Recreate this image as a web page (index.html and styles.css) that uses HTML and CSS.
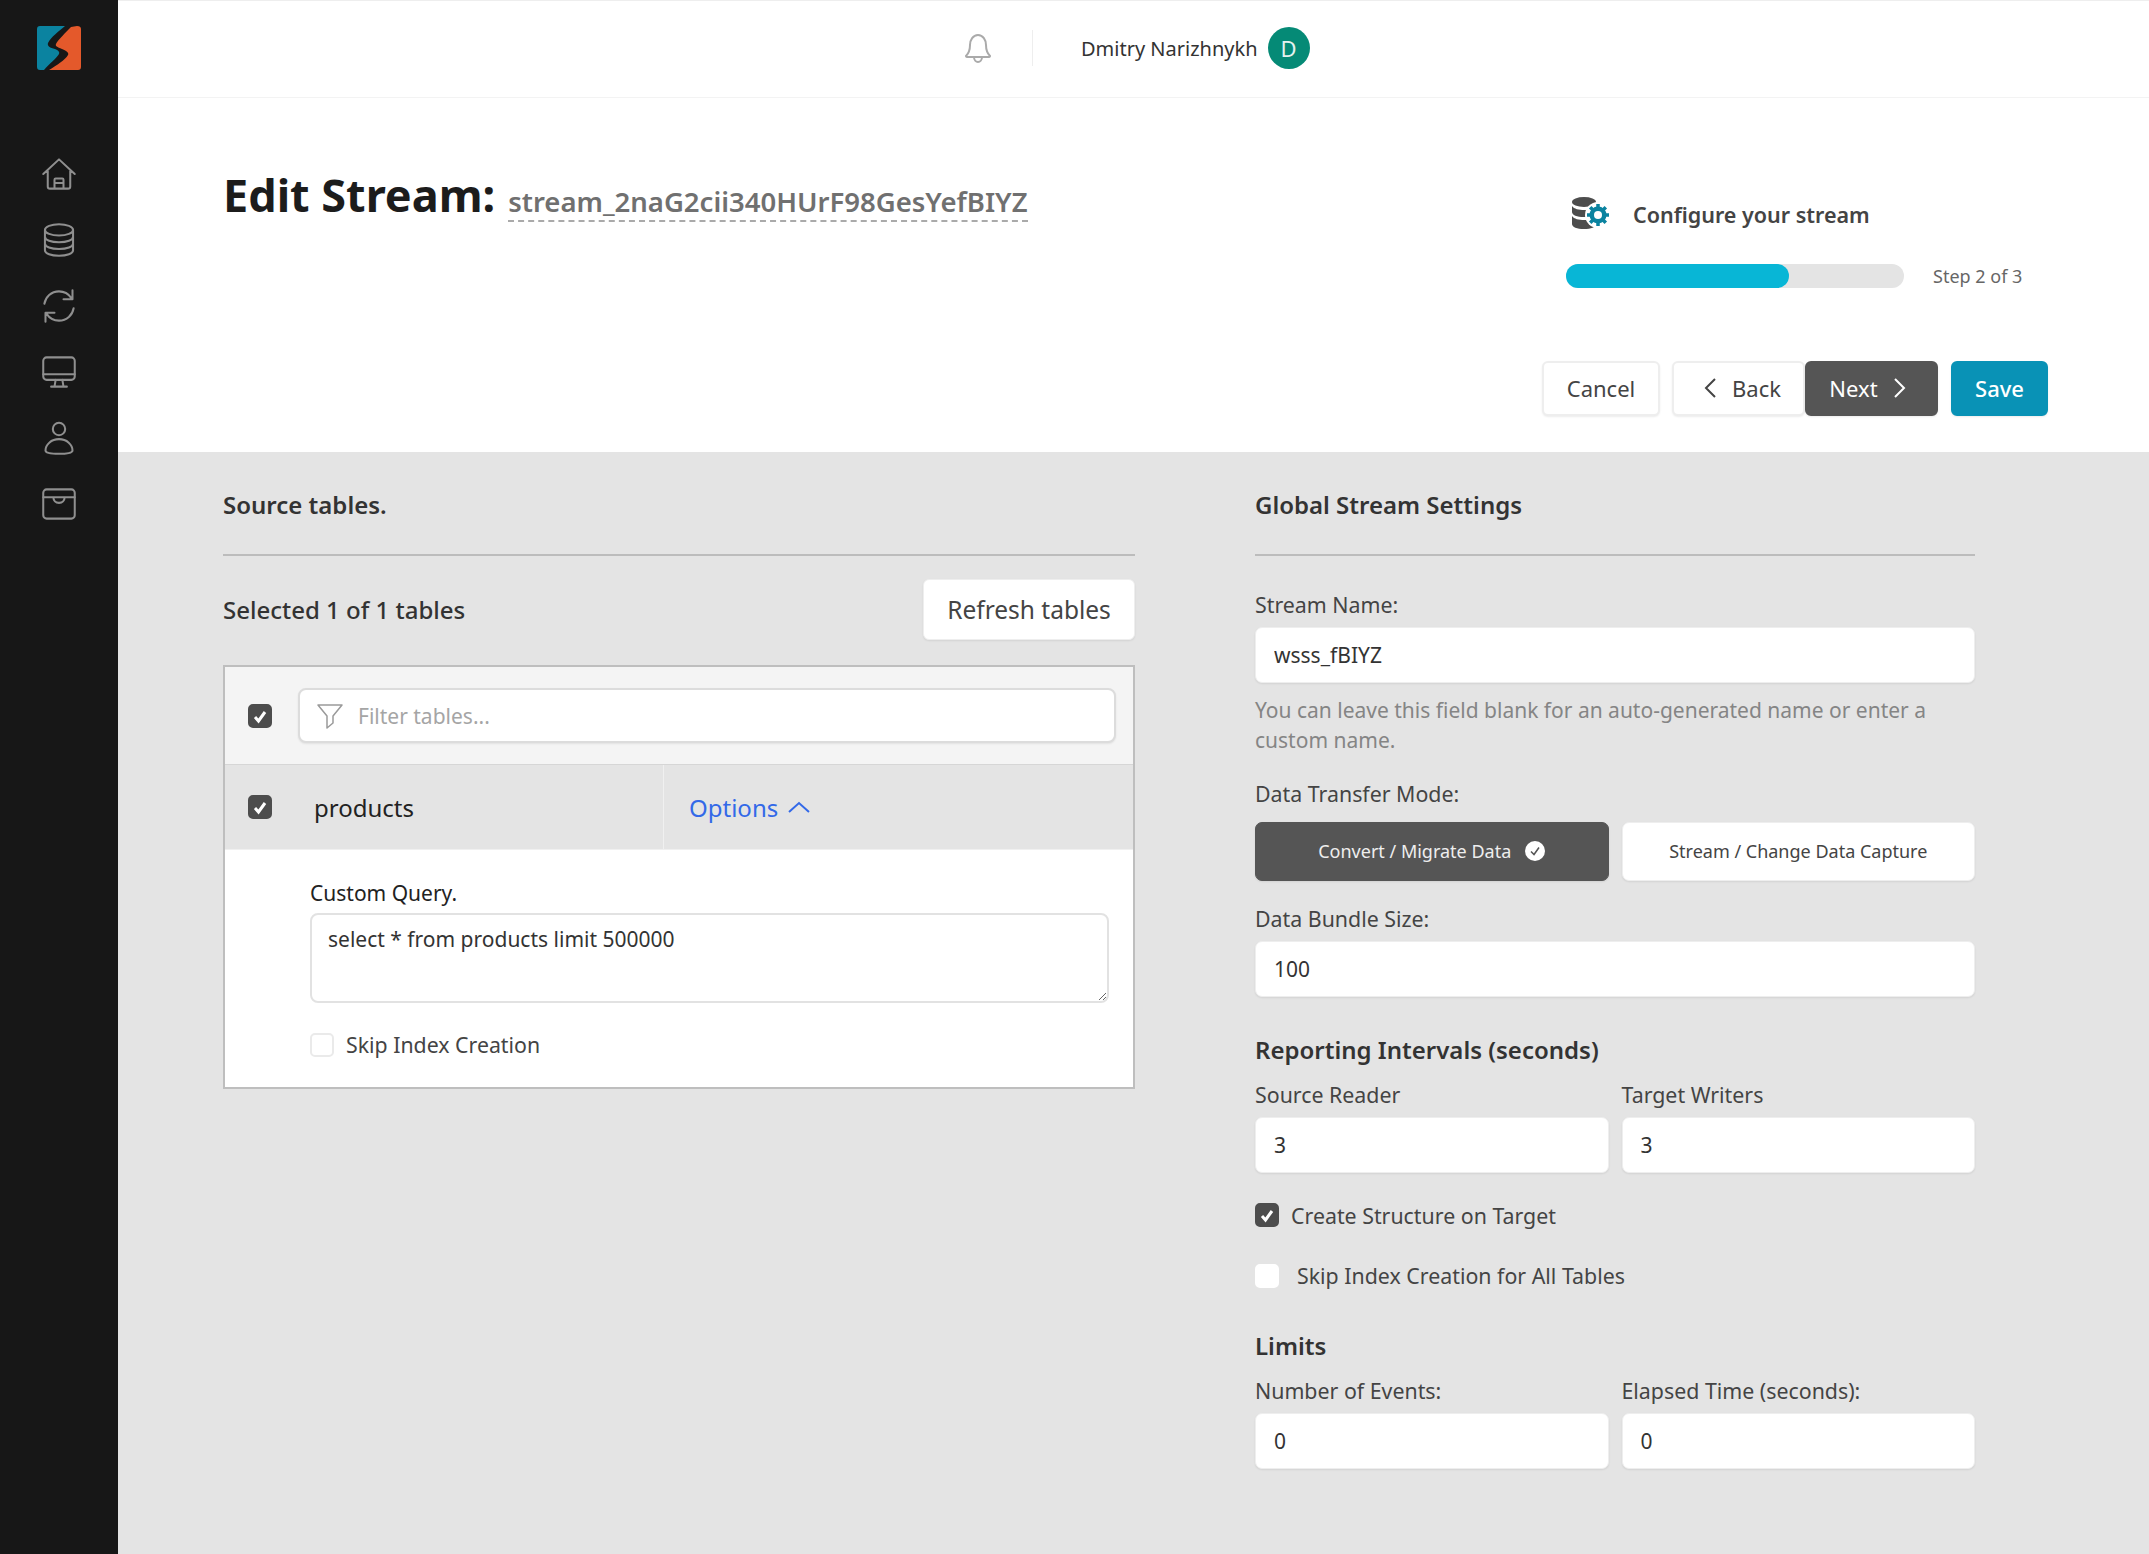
FILE: index.html
```html
<!DOCTYPE html>
<html lang="en">
<head>
    <meta charset="UTF-8">
    <meta name="viewport" content="width=device-width, initial-scale=1.0">
    <title>Edit Stream</title>
    <link rel="stylesheet" href="styles.css">
</head>
<body>
<div class="app">
    <aside class="sidebar">
        <svg class="logo" viewBox="0 0 44 44" width="44" height="44">
            <path d="M3 0H28C22 5 14 11 11 17 10 20 13 22 18 23 21 24 23 26 22 28 20 32 12 38 7 44H3Q0 44 0 41V3Q0 0 3 0Z" fill="#0b83a0"/>
            <path d="M34 1 40 0Q44 0 44 3V41Q44 44 41 44H12C20 39 28 34 31 29 32 27 30 25 25 23 20 21 18 20 19 18 21 14 29 6 34 1Z" fill="#e4592b"/>
        </svg>
        <nav class="nav">
            <svg viewBox="0 0 32 32"><path d="M2 16 16 3l14 13M6 13v14q0 2 2 2h16q2 0 2-2V13M12 29v-8q0-1 1-1h6q1 0 1 1v8M12 24h8"/></svg>
            <svg viewBox="0 0 32 32"><ellipse cx="16" cy="7" rx="12.500" ry="5"/><path d="M3.500 7v18c0 3 5.500 5 12.500 5s12.500-2 12.500-5V7M3.500 13c0 3 5.500 5 12.500 5s12.500-2 12.500-5M3.500 19c0 3 5.500 5 12.500 5s12.500-2 12.500-5"/></svg>
            <svg viewBox="0 0 32 32"><path d="M3 14C4 8 9 3 16 3c5 0 9 3 11 6M29 18c-1 6-6 11-13 11-5 0-9-3-11-6M28 2v8h-8M4 30v-8h8"/></svg>
            <svg viewBox="0 0 32 32"><rect x="2" y="3" width="28" height="20" rx="3"/><path d="M2 18h28M13 23l-1 6M19 23l1 6M9 29h14"/></svg>
            <svg viewBox="0 0 32 32"><circle cx="16" cy="8" r="5.500"/><path d="M16 17C9 17 4 22 4 27c0 2 5 3 12 3s12-1 12-3c0-5-5-10-12-10Z"/></svg>
            <svg viewBox="0 0 32 32"><rect x="2" y="3" width="28" height="26" rx="3"/><path d="M2 10h28M2 10h9c0 3 2 5 5 5s5-2 5-5"/></svg>
        </nav>
    </aside>

    <div class="content">
        <header class="topbar">
            <svg class="bell" viewBox="0 0 28 32"><path d="M2 24c3-3 4-6 4-11 0-5 3-10 8-10s8 5 8 10c0 5 1 8 4 11 0 1-1 1-2 1H4c-1 0-2 0-2-1ZM10 25c0 3 2 5 4 5s4-2 4-5"/></svg>
            <span class="topbar-sep"></span>
            <span class="user-name">Dmitry Narizhnykh</span>
            <span class="avatar">D</span>
        </header>

        <section class="page-head">
            <div class="title-row">
                <h1>Edit Stream:</h1>
                <span class="stream-id">stream_2naG2cii340HUrF98GesYefBIYZ</span>
            </div>
            <div class="wizard">
                <div class="wizard-title">
                    <svg class="wizard-icon" viewBox="0 0 38 34">
                        <ellipse cx="12" cy="5" rx="12" ry="5" fill="#4d4d4d"/>
                        <path d="M0 9v6c0 3 5 5 12 5s12-2 12-5V9c-2 3-7 4-12 4S2 12 0 9Z" fill="#4d4d4d"/>
                        <path d="M0 19v8c0 3 5 5 12 5s12-2 12-5v-8c-2 3-7 4-12 4S2 22 0 19Z" fill="#4d4d4d"/>
                        <circle cx="26" cy="18" r="13" fill="#fff"/>
                        <path d="M26 7v22M15 18h22M18.200 10.200l15.600 15.600M33.800 10.200 18.200 25.800" stroke="#0b83a0" stroke-width="3.500"/>
                        <circle cx="26" cy="18" r="8.500" fill="#0b83a0"/>
                        <circle cx="26" cy="18" r="4" fill="#fff"/>
                    </svg>
                    <span>Configure your stream</span>
                </div>
                <div class="progress-row">
                    <div class="progress"><div class="progress-fill" style="width: 66%"></div></div>
                    <span class="step">Step 2 of 3</span>
                </div>
                <div class="actions">
                    <button class="btn btn-cancel">Cancel</button>
                    <button class="btn btn-back"><svg class="chev" viewBox="0 0 12 20"><path d="M11 1 2 10l9 9"/></svg>Back</button>
                    <button class="btn btn-next">Next<svg class="chev" viewBox="0 0 12 20"><path d="m1 1 9 9-9 9"/></svg></button>
                    <button class="btn btn-save">Save</button>
                </div>
            </div>
        </section>

        <main class="main">
            <section class="col-left">
                <h2 class="section-title">Source tables.</h2>
                <div class="selected-row">
                    <span class="selected-text">Selected 1 of 1 tables</span>
                    <button class="btn-refresh">Refresh tables</button>
                </div>
                <div class="tables">
                    <div class="filter-row">
                        <span class="check checked"><svg viewBox="0 0 24 24"><path d="m7 13 3.500 4L17 8"/></svg></span>
                        <div class="filter-box">
                            <svg class="funnel" viewBox="0 0 26 26"><path d="M1 2h24L16 13v7l-6 5V13Z"/></svg>
                            <input class="filter-input" type="text" placeholder="Filter tables...">
                        </div>
                    </div>
                    <div class="table-row">
                        <div class="table-name">
                            <span class="check checked"><svg viewBox="0 0 24 24"><path d="m7 13 3.500 4L17 8"/></svg></span>
                            <span class="name-text">products</span>
                        </div>
                        <div class="table-options">Options<svg class="chev-up" viewBox="0 0 22 12"><path d="m1 11 10-9 10 9"/></svg></div>
                    </div>
                    <div class="table-detail">
                        <label class="query-label">Custom Query.</label>
                        <textarea class="query">select * from products limit 500000</textarea>
                        <div class="skip-row">
                            <span class="check"></span>
                            <span>Skip Index Creation</span>
                        </div>
                    </div>
                </div>
            </section>

            <section class="col-right">
                <h2 class="section-title">Global Stream Settings</h2>
                <label class="field-label first">Stream Name:</label>
                <input class="field" type="text" value="wsss_fBIYZ">
                <p class="help">You can leave this field blank for an auto-generated name or enter a custom name.</p>
                <label class="field-label mode-label">Data Transfer Mode:</label>
                <div class="modes">
                    <button class="mode mode-on">Convert / Migrate Data
                        <svg class="mode-check" viewBox="0 0 20 20"><circle cx="10" cy="10" r="10" fill="#fff"/><path d="m6 10.500 3 3 5-7" fill="none" stroke="#555" stroke-width="1.500"/></svg>
                    </button>
                    <button class="mode">Stream / Change Data Capture</button>
                </div>
                <label class="field-label bundle-label">Data Bundle Size:</label>
                <input class="field" type="text" value="100">

                <h3 class="sub-title">Reporting Intervals (seconds)</h3>
                <div class="two">
                    <div>
                        <label class="field-label">Source Reader</label>
                        <input class="field" type="text" value="3">
                    </div>
                    <div>
                        <label class="field-label">Target Writers</label>
                        <input class="field" type="text" value="3">
                    </div>
                </div>
                <div class="opt opt-create">
                    <span class="check checked"><svg viewBox="0 0 24 24"><path d="m7 13 3.500 4L17 8"/></svg></span>
                    <span>Create Structure on Target</span>
                </div>
                <div class="opt opt-skip">
                    <span class="check check-plain"></span>
                    <span>Skip Index Creation for All Tables</span>
                </div>

                <h3 class="sub-title limits">Limits</h3>
                <div class="two">
                    <div>
                        <label class="field-label">Number of Events:</label>
                        <input class="field" type="text" value="0">
                    </div>
                    <div>
                        <label class="field-label">Elapsed Time (seconds):</label>
                        <input class="field" type="text" value="0">
                    </div>
                </div>
            </section>
        </main>
    </div>
</div>
</body>
</html>
```

FILE: styles.css
```css
* {
    box-sizing: border-box;
}

html, body {
    margin: 0;
    height: 100%;
}

body {
    font-family: "Noto Sans", "Open Sans", sans-serif;
    color: #333;
    background-color: #fff;
    overflow: hidden;
}

button, input, textarea {
    font-family: inherit;
}

.app {
    display: flex;
    height: 1554px;
}

/* sidebar */
.sidebar {
    width: 118px;
    flex-shrink: 0;
    background-color: #171717;
    display: flex;
    flex-direction: column;
    align-items: center;
}

.logo {
    margin-top: 26px;
}

.nav {
    margin-top: 86px;
    display: flex;
    flex-direction: column;
    gap: 30px;
}

.nav svg {
    display: block;
    width: 36px;
    height: 36px;
    fill: none;
    stroke: #8f8f8f;
    stroke-width: 1.800;
    stroke-linecap: round;
    stroke-linejoin: round;
}

/* top bar */
.content {
    flex: 1;
    display: flex;
    flex-direction: column;
    min-width: 0;
}

.topbar {
    height: 98px;
    display: flex;
    align-items: center;
    padding-left: 846px;
    padding-bottom: 2px;
    border-top: 1px solid #eee;
    border-bottom: 1px solid #f3f3f3;
}

.bell {
    width: 28px;
    height: 32px;
    fill: none;
    stroke: #aaa;
    stroke-width: 2;
}

.topbar-sep {
    width: 1px;
    height: 36px;
    background-color: #eee;
    margin-left: 40px;
    margin-right: 48px;
}

.user-name {
    font-size: 20px;
    color: #333;
}

.avatar {
    width: 42px;
    height: 42px;
    border-radius: 50%;
    background-color: #058a76;
    color: #e4f2ef;
    margin-left: 10px;
    display: flex;
    align-items: center;
    justify-content: center;
    font-size: 22px;
}

/* heading area */
.page-head {
    height: 354px;
    display: flex;
    justify-content: space-between;
    padding-left: 105px;
    padding-right: 101px;
}

.title-row {
    display: flex;
    align-items: baseline;
    height: 70px;
    margin-top: 62px;
}

h1 {
    margin: 0;
    font-size: 45px;
    font-weight: 700;
    color: #1c1c1c;
    line-height: 70px;
}

.stream-id {
    margin-left: 13px;
    font-size: 27.500px;
    font-weight: 600;
    color: #707070;
    line-height: 36px;
    border-bottom: 2px dashed #aaa;
}

.wizard {
    width: 506px;
}

.wizard-title {
    display: flex;
    align-items: center;
    margin-top: 99px;
    margin-left: 30px;
    height: 34px;
    font-size: 21.500px;
    font-weight: 600;
    color: #444;
}

.wizard-icon {
    width: 38px;
    height: 34px;
    margin-right: 23px;
}

.progress-row {
    display: flex;
    align-items: center;
    margin-top: 33px;
    margin-left: 24px;
}

.progress {
    width: 338px;
    height: 24px;
    border-radius: 12px;
    background-color: #e4e4e4;
}

.progress-fill {
    height: 100%;
    border-radius: 12px;
    background-color: #08b6d6;
}

.step {
    margin-left: 29px;
    font-size: 18px;
    color: #666;
}

.actions {
    display: flex;
    margin-top: 73px;
}

.btn {
    height: 55px;
    font-size: 22px;
    border-radius: 6px;
    border: 2px solid #eee;
    background-color: #fff;
    color: #444;
    display: flex;
    align-items: center;
    justify-content: center;
    gap: 16px;
    padding: 0 0 2px;
    box-shadow: 0 1px 2px rgba(0, 0, 0, 0.08);
}

.btn-cancel {
    width: 118px;
    margin-right: 12px;
}

.btn-back {
    width: 133px;
    padding-left: 8px;
}

.btn-next {
    width: 133px;
    background-color: #555;
    border-color: #555;
    color: #fff;
    margin-right: 13px;
    padding-right: 8px;
}

.btn-save {
    width: 97px;
    background-color: #0992b6;
    border-color: #0992b6;
    color: #fff;
    font-weight: 500;
}

.chev {
    width: 12px;
    height: 20px;
    fill: none;
    stroke: currentColor;
    stroke-width: 2;
}

/* main area */
.main {
    flex: 1;
    background-color: #e4e4e4;
    display: flex;
    padding-left: 105px;
    gap: 120px;
}

.col-left {
    width: 912px;
}

.col-right {
    width: 720px;
}

.section-title {
    margin: 0;
    padding-top: 36px;
    padding-bottom: 32.500px;
    font-size: 24px;
    line-height: 33px;
    font-weight: 600;
    color: #333;
    border-bottom: 2px solid #bcbcbc;
}

.selected-row {
    display: flex;
    justify-content: space-between;
    align-items: center;
    margin-top: 22.500px;
    height: 62px;
}

.selected-text {
    font-size: 24px;
    font-weight: 500;
    color: #333;
}

.btn-refresh {
    width: 212px;
    height: 61px;
    font-size: 24.500px;
    color: #444;
    background-color: #fff;
    border: 1px solid #eee;
    border-radius: 6px;
    box-shadow: 0 1px 2px rgba(0, 0, 0, 0.08);
}

.tables {
    margin-top: 25px;
    border: 2px solid #bebebe;
    background-color: #fff;
    border-top-width: 2px;
}

.filter-row {
    height: 98px;
    background-color: #f4f4f4;
    display: flex;
    align-items: center;
    padding-left: 23px;
    padding-right: 17px;
    border-bottom: 1px solid #d6d6d6;
}

.check {
    width: 24px;
    height: 24px;
    flex-shrink: 0;
    display: block;
    border: 2px solid #eaeaea;
    border-radius: 5px;
    background-color: #fff;
}

.check svg {
    display: block;
    width: 24px;
    height: 24px;
    margin: -2px;
    fill: none;
    stroke: #fff;
    stroke-width: 3;
}

.check.checked {
    background-color: #4d4d4d;
    border-color: #4d4d4d;
}

.filter-box {
    flex: 1;
    margin-left: 26px;
    height: 55px;
    display: flex;
    align-items: center;
    background-color: #fff;
    border: 2px solid #dcdcdc;
    border-radius: 8px;
    padding-left: 17px;
    box-shadow: 0 1px 2px rgba(0, 0, 0, 0.08);
}

.funnel {
    width: 26px;
    height: 26px;
    fill: none;
    stroke: #9a9a9a;
    stroke-width: 1.500;
    stroke-linejoin: round;
}

.filter-input {
    border: none;
    outline: none;
    flex: 1;
    margin-left: 15px;
    font-size: 21px;
    color: #333;
    background: transparent;
    padding: 0;
}

.filter-input::placeholder {
    color: #a5a5a5;
}

.table-row {
    display: flex;
    height: 85px;
    background-color: #e4e4e4;
    border-bottom: 1px solid #f0f0f0;
}

.table-name {
    width: 439px;
    display: flex;
    align-items: center;
    padding-left: 23px;
    border-right: 1px solid #f0f0f0;
}

.name-text {
    margin-left: 42px;
    font-size: 24px;
    color: #222;
}

.table-options {
    display: flex;
    align-items: center;
    gap: 10px;
    padding-left: 25px;
    font-size: 24px;
    color: #3369e8;
}

.chev-up {
    width: 22px;
    height: 12px;
    fill: none;
    stroke: #3369e8;
    stroke-width: 2;
}

.table-detail {
    padding: 28px 24px 0 85px;
    height: 237px;
}

.query-label {
    display: block;
    font-size: 21px;
    line-height: 30px;
    color: #222;
}

.query {
    display: block;
    width: 100%;
    height: 90px;
    margin-top: 5px;
    padding: 10px 16px;
    font-size: 21px;
    line-height: 28px;
    color: #333;
    border: 2px solid #e2e2e2;
    border-radius: 8px;
    outline: none;
    resize: vertical;
}

.skip-row {
    display: flex;
    align-items: center;
    margin-top: 27px;
    font-size: 21.300px;
    color: #444;
    gap: 12px;
}

/* right column */
.field-label {
    display: block;
    font-size: 21.350px;
    line-height: 30px;
    color: #444;
    margin-bottom: 7px;
}

.field-label.first {
    margin-top: 34px;
}

.field {
    display: block;
    width: 100%;
    height: 56px;
    padding: 0 18px;
    font-size: 21px;
    color: #333;
    background-color: #fff;
    border: 1px solid #eee;
    border-radius: 7px;
    outline: none;
    box-shadow: 0 1px 2px rgba(0, 0, 0, 0.08);
}

.help {
    margin: 12px 0 0;
    font-size: 21px;
    line-height: 30px;
    color: #858585;
}

.mode-label {
    margin-top: 24px;
    margin-bottom: 13px;
}

.modes {
    display: flex;
    gap: 13px;
}

.mode {
    flex: 1;
    height: 59px;
    font-size: 18px;
    color: #444;
    background-color: #fff;
    border: 1px solid #eee;
    border-radius: 7px;
    display: flex;
    align-items: center;
    justify-content: center;
    gap: 14px;
    padding: 0;
    box-shadow: 0 1px 2px rgba(0, 0, 0, 0.08);
}

.mode-on {
    background-color: #555;
    border-color: #555;
    color: #eee;
}

.mode-check {
    width: 20px;
    height: 20px;
}

.bundle-label {
    margin-top: 23px;
}

.sub-title {
    margin: 36px 0 14px;
    font-size: 24px;
    line-height: 33px;
    font-weight: 600;
    color: #333;
}

.two {
    display: grid;
    grid-template-columns: 1fr 1fr;
    gap: 13px;
}

.opt {
    display: flex;
    align-items: center;
    font-size: 21.350px;
    color: #444;
}

.opt-create {
    margin-top: 28px;
    gap: 12px;
}

.opt-skip {
    margin-top: 31.500px;
    gap: 18px;
}

.check-plain {
    border-color: #fff;
}

.limits {
    margin-top: 38.500px;
}
```
